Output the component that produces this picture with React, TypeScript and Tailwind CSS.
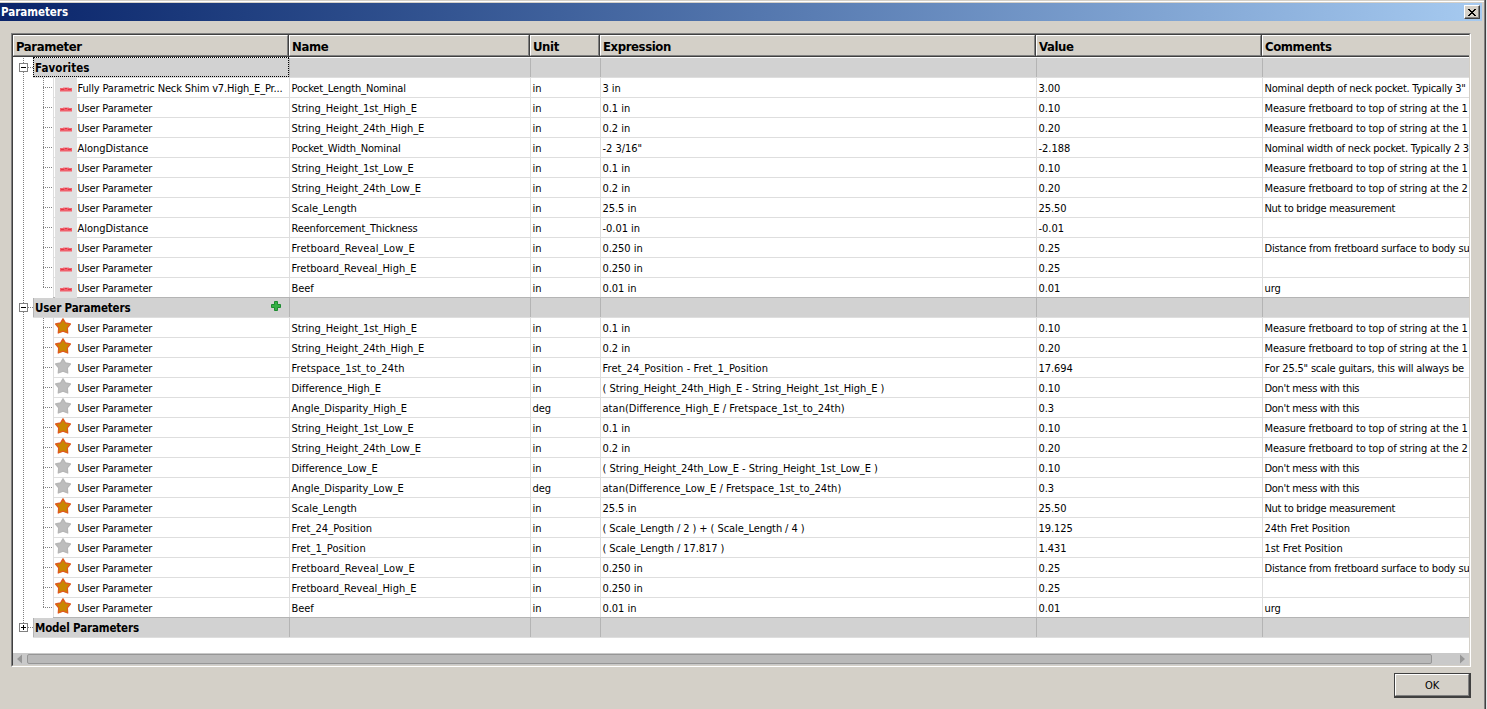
import React from "react";

type Param = {
  icon: "pin" | "on" | "off";
  source: string;
  name: string;
  unit: string;
  expr: string;
  value: string;
  comment: string;
};

const UP = "User Parameter";
const M1 = "Measure fretboard to top of string at the 1";
const M2 = "Measure fretboard to top of string at the 2";
const DIST = "Distance from fretboard surface to body su";
const p = (
  icon: Param["icon"],
  source: string,
  name: string,
  unit: string,
  expr: string,
  value: string,
  comment = ""
): Param => ({ icon, source, name, unit, expr, value, comment });

const favorites: Param[] = [
  p("pin", "Fully Parametric Neck Shim v7.High_E_Pr...", "Pocket_Length_Nominal", "in", "3 in", "3.00", 'Nominal depth of neck pocket. Typically 3"'),
  p("pin", UP, "String_Height_1st_High_E", "in", "0.1 in", "0.10", M1),
  p("pin", UP, "String_Height_24th_High_E", "in", "0.2 in", "0.20", M1),
  p("pin", "AlongDistance", "Pocket_Width_Nominal", "in", '-2 3/16"', "-2.188", "Nominal width of neck pocket. Typically 2 3"),
  p("pin", UP, "String_Height_1st_Low_E", "in", "0.1 in", "0.10", M1),
  p("pin", UP, "String_Height_24th_Low_E", "in", "0.2 in", "0.20", M2),
  p("pin", UP, "Scale_Length", "in", "25.5 in", "25.50", "Nut to bridge measurement"),
  p("pin", "AlongDistance", "Reenforcement_Thickness", "in", "-0.01 in", "-0.01"),
  p("pin", UP, "Fretboard_Reveal_Low_E", "in", "0.250 in", "0.25", DIST),
  p("pin", UP, "Fretboard_Reveal_High_E", "in", "0.250 in", "0.25"),
  p("pin", UP, "Beef", "in", "0.01 in", "0.01", "urg"),
];

const userParams: Param[] = [
  p("on", UP, "String_Height_1st_High_E", "in", "0.1 in", "0.10", M1),
  p("on", UP, "String_Height_24th_High_E", "in", "0.2 in", "0.20", M1),
  p("off", UP, "Fretspace_1st_to_24th", "in", "Fret_24_Position - Fret_1_Position", "17.694", 'For 25.5" scale guitars, this will always be'),
  p("off", UP, "Difference_High_E", "in", "( String_Height_24th_High_E - String_Height_1st_High_E )", "0.10", "Don't mess with this"),
  p("off", UP, "Angle_Disparity_High_E", "deg", "atan(Difference_High_E / Fretspace_1st_to_24th)", "0.3", "Don't mess with this"),
  p("on", UP, "String_Height_1st_Low_E", "in", "0.1 in", "0.10", M1),
  p("on", UP, "String_Height_24th_Low_E", "in", "0.2 in", "0.20", M2),
  p("off", UP, "Difference_Low_E", "in", "( String_Height_24th_Low_E - String_Height_1st_Low_E )", "0.10", "Don't mess with this"),
  p("off", UP, "Angle_Disparity_Low_E", "deg", "atan(Difference_Low_E / Fretspace_1st_to_24th)", "0.3", "Don't mess with this"),
  p("on", UP, "Scale_Length", "in", "25.5 in", "25.50", "Nut to bridge measurement"),
  p("off", UP, "Fret_24_Position", "in", "( Scale_Length / 2 ) + ( Scale_Length / 4 )", "19.125", "24th Fret Position"),
  p("off", UP, "Fret_1_Position", "in", "( Scale_Length / 17.817 )", "1.431", "1st Fret Position"),
  p("on", UP, "Fretboard_Reveal_Low_E", "in", "0.250 in", "0.25", DIST),
  p("on", UP, "Fretboard_Reveal_High_E", "in", "0.250 in", "0.25"),
  p("on", UP, "Beef", "in", "0.01 in", "0.01", "urg"),
];

function tracking(text: string): string {
  if (text.startsWith("Fret_")) return text.length > 20 ? "tracking-[0.08px]" : "tracking-[0.06px]";
  if (text.startsWith("Fretspace")) return "tracking-[0.12px]";
  if (text.startsWith("Fretboard_Reveal_High")) return "tracking-[0.03px]";
  if (text.startsWith("Fretboard")) return "tracking-[0.1px]";
  if (text.startsWith("Reenforcement")) return "tracking-[-0.15px]";
  if (text.startsWith("Measure")) return "tracking-[-0.15px]";
  if (text.startsWith("Distance")) return "tracking-[-0.2px]";
  if (text.startsWith("Nominal")) return "tracking-[-0.23px]";
  if (text.startsWith("Nut to")) return "tracking-[-0.28px]";
  if (text.startsWith("Don't")) return "tracking-[-0.32px]";
  if (text.startsWith("For 25")) return "tracking-[-0.19px]";
  if (text.startsWith("Pocket")) return "tracking-[-0.14px]";
  if (text.startsWith("( String")) return "tracking-[-0.04px]";
  if (text.startsWith("( Scale")) return "tracking-[-0.09px]";
  if (text.startsWith("atan")) return "tracking-[0.04px]";
  if (text.startsWith("Fully")) return "tracking-[-0.14px]";
  if (text.startsWith("User")) return "tracking-[-0.17px]";
  return "tracking-[-0.04px]";
}

function Dots({ d }: { d: string }) {
  return <path d={d} stroke="#808080" strokeDasharray="1 1" fill="none" />;
}

function ChildGutter({ last }: { last: boolean }) {
  return (
    <svg width="40" height="20" className="shrink-0" shapeRendering="crispEdges">
      <Dots d="M10.5 0V20" />
      <Dots d={last ? "M30.5 0V10" : "M30.5 0V20"} />
      <Dots d="M30 9.5H40" />
    </svg>
  );
}

function GroupGutter({ open }: { open: boolean }) {
  return (
    <svg width="20" height="20" className="shrink-0" shapeRendering="crispEdges">
      <Dots d={open ? "M10.5 0V20" : "M10.5 0V9"} />
      <Dots d="M15 9.5H20" />
      <rect x="6.5" y="5.5" width="8" height="8" fill="#fff" stroke="#808080" />
      <path d={open ? "M8 9.5H13" : "M8 9.5H13M10.5 7V12"} stroke="#000" />
    </svg>
  );
}

function Star({ on }: { on: boolean }) {
  return (
    <svg width="18" height="18" viewBox="0 0 18 18" className="-mt-px shrink-0">
      <path
        d="M9 1.8L11.5 6L16.4 7L13.3 10.8L13.7 16L9 14.2L4.3 16L4.7 10.8L1.6 7L6.5 6Z"
        fill={on ? "#c98600" : "#bdbdbd"}
        stroke={on ? "#de5a20" : "#b6b6b6"}
        strokeWidth="1.3"
        strokeLinejoin="round"
      />
    </svg>
  );
}

function Pin() {
  return (
    <svg width="12" height="5" shapeRendering="crispEdges" className="mt-[9px] shrink-0">
      <rect x="3" y="0" width="6" height="1" fill="#eba9af" />
      <rect x="0" y="1" width="12" height="3" fill="#f0606c" />
      <rect x="1" y="2" width="3" height="1" fill="#e23645" />
      <rect x="5" y="1" width="2" height="1" fill="#e23645" />
      <rect x="8" y="2" width="3" height="1" fill="#e23645" />
      <rect x="0" y="4" width="12" height="1" fill="#ea9fa6" />
    </svg>
  );
}

function Cell({ w, dark, children }: { w: string; dark?: boolean; children?: string }) {
  return (
    <div
      className={`${w} shrink-0 overflow-hidden whitespace-pre border-l pl-[1.5px] ${children ? tracking(children) : ""} ${
        dark ? "border-[#b4b4b4]" : "border-[#dedede]"
      }`}
    >
      {children}
    </div>
  );
}

function ParamRow({ r, last }: { r: Param; last: boolean }) {
  return (
    <div className="flex h-5">
      <ChildGutter last={last} />
      <div className={`flex min-w-0 grow border-b leading-[21px] ${last ? "border-[#b4b4b4]" : "border-[#dedede]"}`}>
        <div className="flex w-[236px] shrink-0 border-l border-[#dedede]">
          {r.icon === "pin" ? (
            <div className="ml-px flex h-5 w-[22px] shrink-0 bg-[#e1e1e1] pl-[5px]">
              <Pin />
            </div>
          ) : (
            <div className="flex w-[23px] shrink-0">
              <Star on={r.icon === "on"} />
            </div>
          )}
          <span className={`whitespace-pre pl-[0.5px] ${tracking(r.source)}`}>{r.source}</span>
        </div>
        <Cell w="w-[241px]">{r.name}</Cell>
        <Cell w="w-[70px]">{r.unit}</Cell>
        <Cell w="w-[436px]">{r.expr}</Cell>
        <Cell w="w-[226px]">{r.value}</Cell>
        <Cell w="w-[207px]">{r.comment}</Cell>
      </div>
    </div>
  );
}

function GroupRow({ title, open = true, focus, add }: { title: string; open?: boolean; focus?: boolean; add?: boolean }) {
  return (
    <div className="flex h-5">
      <GroupGutter open={open} />
      <div className="flex min-w-0 grow border-b border-[#dedede] bg-[#d2d2d2]">
        <div
          className={`flex w-[256px] shrink-0 justify-between pl-px text-[11.5px] font-bold ${
            focus
              ? "-mt-px border border-dotted border-black leading-[21px] tracking-[0.05px]"
              : "border-l border-[#b4b4b4] leading-[21px] tracking-[-0.15px]"
          }`}
        >
          <span>{title}</span>
          {add && (
            <svg width="11" height="11" className="mr-[7px] mt-[3px]">
              <path d="M3.5 .5h3v3h3v3h-3v3h-3v-3h-3v-3h3z" fill="#35b044" stroke="#1d8a30" />
            </svg>
          )}
        </div>
        <Cell dark w="w-[241px]" />
        <Cell dark w="w-[70px]" />
        <Cell dark w="w-[436px]" />
        <Cell dark w="w-[226px]" />
        <Cell dark w="w-[207px]" />
      </div>
    </div>
  );
}

function Head({ w, last, children }: { w: string; last?: boolean; children: React.ReactNode }) {
  return (
    <div className={`${w} flex shrink-0 ${last ? "" : "border-r border-[#404040]"}`}>
      <div
        className={`h-[21px] grow border-b border-l border-t border-b-[#808080] border-l-white border-t-white pl-[2px] text-[13px] font-bold leading-[21px] tracking-[-0.4px] ${
          last ? "" : "border-r border-r-[#808080]"
        }`}
      >
        {children}
      </div>
    </div>
  );
}

export default function App() {
  return (
    <div className="flex h-[709px] w-[1487px] overflow-hidden bg-[#e4e4e8] text-[11px] text-black [font-family:'DejaVu_Sans_Condensed','DejaVu_Sans',sans-serif] [font-stretch:condensed]">
      <div className="flex h-full w-[1486px] flex-col border-r border-[#404040] bg-[#d4d0c8]">
        <div className="flex min-h-0 grow flex-col border-r border-[#808080]">
          <div className="mt-px h-px bg-white" />
          <div className="mt-px flex h-[18px] w-[1482px] items-center bg-linear-to-r from-[#0a246a] to-[#a6caf0] pl-px pr-[2px]">
            <span className="grow text-[11.5px] font-bold leading-[18px] tracking-[-0.03px] text-white">Parameters</span>
            <button className="flex h-[14px] w-4 items-center justify-center border border-b-[#404040] border-l-white border-r-[#404040] border-t-white bg-[#d4d0c8] shadow-[inset_-1px_-1px_0_#808080]">
              <svg width="8" height="7" shapeRendering="crispEdges">
                <path
                  d="M0 0h2v1h1v1h2v-1h1v-1h2v1h-1v1h-1v1h-1v1h1v1h1v1h1v1h-2v-1h-1v-1h-2v1h-1v1h-2v-1h1v-1h1v-1h1v-1h-1v-1h-1v-1h-1z"
                  fill="#000"
                />
              </svg>
            </button>
          </div>
          <div className="ml-[11px] mt-3 h-[634px] w-[1460px] border border-b-white border-l-[#808080] border-r-white border-t-[#808080]">
            <div className="flex h-full flex-col overflow-hidden border border-b-[#d4d0c8] border-l-[#404040] border-r-[#d4d0c8] border-t-[#404040] bg-white">
              <div className="flex h-[22px] shrink-0 border-b border-[#404040] bg-[#d4d0c8]">
                <Head w="w-[276px]">Parameter</Head>
                <Head w="w-[241px]">Name</Head>
                <Head w="w-[70px]">Unit</Head>
                <Head w="w-[436px]">Expression</Head>
                <Head w="w-[226px]">Value</Head>
                <Head w="w-[207px]" last>
                  Comments
                </Head>
              </div>
              <div className="mt-px flex min-h-0 grow flex-col">
                <GroupRow title="Favorites" focus />
                {favorites.map((r, i) => (
                  <ParamRow key={i} r={r} last={i === favorites.length - 1} />
                ))}
                <GroupRow title="User Parameters" add />
                {userParams.map((r, i) => (
                  <ParamRow key={i} r={r} last={i === userParams.length - 1} />
                ))}
                <GroupRow title="Model Parameters" open={false} />
              </div>
              <div className="flex h-3 shrink-0 bg-[#c9c9c9] pt-px">
                <svg width="14" height="10">
                  <path d="M9 .5v9L4 5z" fill="#969696" />
                </svg>
                <div className="h-[10px] w-[1405px] rounded-[2px] border border-[#969696] bg-[#b9b9b9]" />
                <svg width="37" height="10">
                  <path d="M28 .5v9L33 5z" fill="#969696" />
                </svg>
              </div>
            </div>
          </div>
          <button className="ml-[1394px] mt-[6px] h-[25px] w-[77px] border border-b-2 border-r-2 border-[#404040] p-0">
            <span className="block h-full border border-b-[#808080] border-l-white border-r-[#808080] border-t-white pt-px leading-[20px] tracking-[-0.2px]">
              OK
            </span>
          </button>
        </div>
      </div>
    </div>
  );
}
